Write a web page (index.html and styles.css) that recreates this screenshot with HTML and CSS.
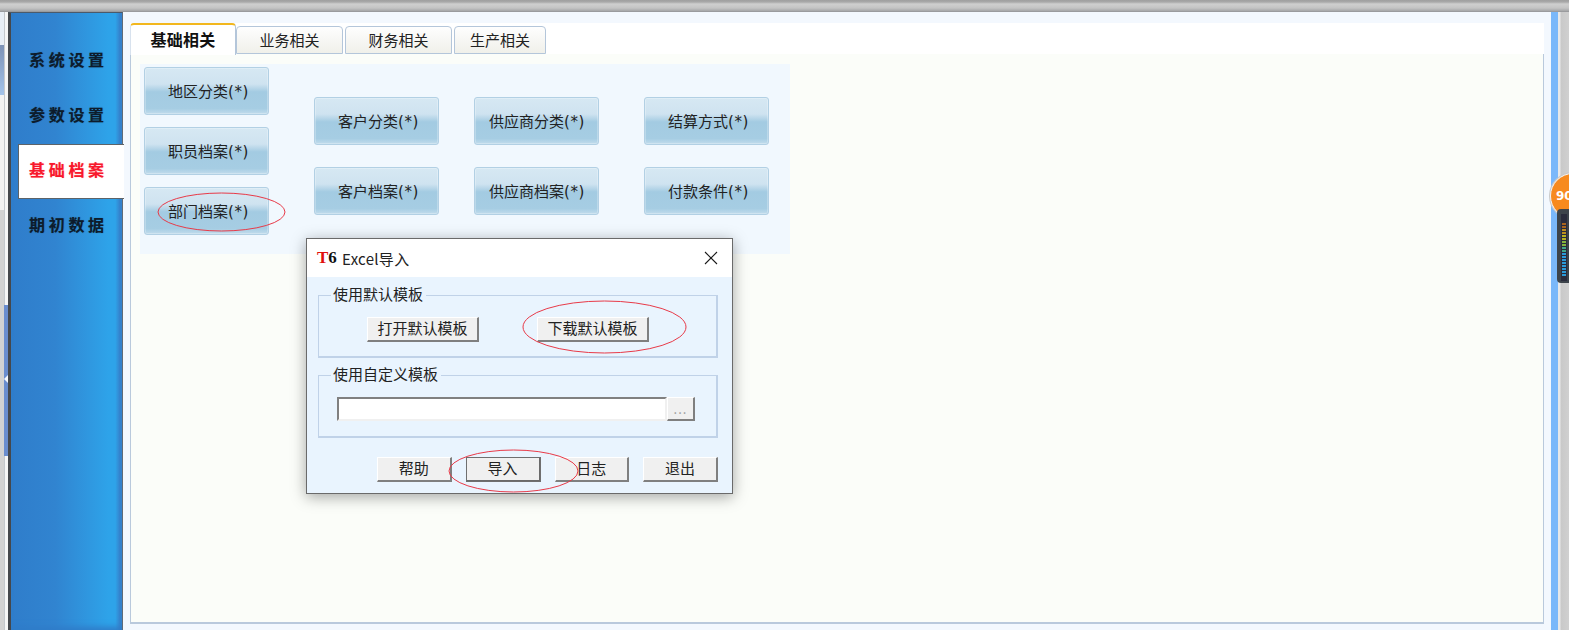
FILE: index.html
```html
<!DOCTYPE html>
<html lang="zh-CN">
<head>
<meta charset="utf-8">
<title>T6 基础档案</title>
<link rel="stylesheet" href="styles.css">
</head>
<body>
<div class="app">
  <div class="topbar"></div>
  <div class="workspace">
    <div class="rail">
      <div class="rail-left">
        <div class="rail-a"></div>
        <div class="rail-b"></div>
        <div class="rail-c"></div>
        <div class="rail-d"></div>
      </div>
      <div class="rail-right">
        <div class="rail-handle"><span class="rail-arrow"></span></div>
      </div>
    </div>
    <nav class="sidebar">
      <div class="side-item">系统设置</div>
      <div class="side-item">参数设置</div>
      <div class="side-item active">基础档案</div>
      <div class="side-item">期初数据</div>
    </nav>
    <main class="main">
      <div class="tabs">
        <div class="tab active">基础相关</div>
        <div class="tab t2">业务相关</div>
        <div class="tab t2">财务相关</div>
        <div class="tab t3">生产相关</div>
      </div>
      <div class="panel">
        <div class="btn-area">
          <div class="col col-a">
            <button class="tile">地区分类<span class="req">(*)</span></button>
            <button class="tile">职员档案<span class="req">(*)</span></button>
            <button class="tile">部门档案<span class="req">(*)</span></button>
          </div>
          <div class="col col-b">
            <button class="tile">客户分类<span class="req">(*)</span></button>
            <button class="tile">客户档案<span class="req">(*)</span></button>
          </div>
          <div class="col col-c">
            <button class="tile long">供应商分类<span class="req">(*)</span></button>
            <button class="tile long">供应商档案<span class="req">(*)</span></button>
          </div>
          <div class="col col-d">
            <button class="tile">结算方式<span class="req">(*)</span></button>
            <button class="tile">付款条件<span class="req">(*)</span></button>
          </div>
        </div>
      </div>
    </main>
    <div class="right-blue"></div>
    <div class="right-gray"></div>
  </div>
</div>

<section class="dialog">
  <header class="dlg-title">
    <span class="logo"><span class="logo-t">T</span>6</span>
    <span class="dlg-name">Excel导入</span>
    <svg class="dlg-close" width="14" height="14" viewBox="0 0 14 14"><path d="M1 1 13 13M13 1 1 13" stroke="#1a1a1a" stroke-width="1.1" fill="none"/></svg>
  </header>
  <div class="dlg-body">
    <fieldset class="group">
      <legend>使用默认模板</legend>
      <div class="group-row">
        <button class="win-btn wide">打开默认模板</button>
        <button class="win-btn wide">下载默认模板</button>
      </div>
    </fieldset>
    <fieldset class="group">
      <legend>使用自定义模板</legend>
      <div class="path-row">
        <input class="path-input" type="text">
        <button class="browse">...</button>
      </div>
    </fieldset>
    <div class="dlg-actions">
      <button class="win-btn">帮助</button>
      <button class="win-btn focus">导入</button>
      <button class="win-btn">日志</button>
      <button class="win-btn">退出</button>
    </div>
  </div>
</section>

<div class="meter">
  <div class="meter-dial">90</div>
  <div class="meter-bar">
    <i class="m1"></i><i class="m1"></i><i class="m2"></i><i class="m2"></i><i class="m3"></i><i class="m3"></i><i class="m4"></i><i class="m4"></i><i class="m5"></i><i class="m5"></i><i class="m6"></i><i class="m6"></i><i class="m6"></i><i class="m6"></i><i class="m6"></i><i class="m6"></i><i class="m6"></i><i class="m6"></i>
  </div>
</div>

<svg class="marks" width="1569" height="630" viewBox="0 0 1569 630">
  <ellipse cx="221.5" cy="212" rx="63.5" ry="19" />
  <ellipse cx="604.5" cy="327" rx="81.5" ry="26" />
  <ellipse cx="513.5" cy="471" rx="64.5" ry="21" />
</svg>
</body>
</html>
```
FILE: styles.css
```css
* { box-sizing: border-box; }
html, body { margin: 0; padding: 0; }
body {
  width: 1569px;
  height: 630px;
  overflow: hidden;
  position: relative;
  background: #f3f8fe;
  font-family: "Noto Sans CJK SC", "Noto Sans", sans-serif;
  color: #1c1c1c;
}
button { font-family: inherit; padding: 0; cursor: default; }

.app { display: flex; flex-direction: column; height: 630px; }
.topbar {
  height: 12px;
  flex: none;
  background: linear-gradient(#9f9f9f 0, #a9a9a9 2px, #cfcfcf 4px, #c4c4c4 8px, #a5a6a8 11px, #8f9093 12px);
}
.workspace { flex: 1; display: flex; min-height: 0; }

/* left rail */
.rail { width: 8px; flex: none; display: flex; background: #f2f2f2; }
.rail-left { width: 4px; display: flex; flex-direction: column; }
.rail-a { height: 33px; background: #e8eef5; }
.rail-b { height: 50px; background: linear-gradient(#7d92b6, #a3c3ea); }
.rail-c { height: 115px; background: #f2f2f2; }
.rail-d { flex: 1; background: #d2d2d2; }
.rail-right { flex: 1; position: relative; background: #f6f6f6; border-left: 1px solid #c4c8cc; padding-top: 293px; }
.rail-handle { height: 151px; margin-left: -1px; background: #6a8dce; position: relative; }
.rail-arrow {
  position: absolute; left: 0; top: 70px; width: 0; height: 0;
  border: 4px solid transparent; border-left: 0; border-right: 4px solid #f4f8ff;
}

/* sidebar */
.sidebar {
  width: 115px;
  flex: none;
  padding-top: 21px;
  background: linear-gradient(90deg, #2f7dcb 0, #3184d0 40%, #2ea3e9 88%, #2ea3e9 94%, #3582cc 98%);
  border-left: 3px solid #45484c;
  border-top: 1px solid #4b5a6b;
  border-right: 1px solid #5f6b78;
  box-shadow: inset 0 -8px 6px -5px #2f7cc8;
}
.side-item {
  height: 55px;
  display: flex;
  align-items: center;
  padding: 0 0 5px 18px;
  font-size: 16px;
  font-weight: 700;
  letter-spacing: 3.7px;
  color: #0d1c2c;
  white-space: nowrap;
  text-shadow: 0 0 1px rgba(13, 28, 44, .45);
}
.side-item.active {
  position: relative;
  margin: 0 -2px 0 7px;
  height: 55px;
  padding: 0 0 5px 10px;
  color: #f8182c;
  text-shadow: 0 0 1px rgba(248, 24, 44, .45);
  background: #fff;
  border: 1px solid #5d6368;
  border-right: 0;
}

/* main */
.main { flex: 1; min-width: 0; padding: 11px 7px 6px 7px; display: flex; flex-direction: column; }
.tabs { height: 31px; flex: none; display: flex; align-items: flex-end; background: #fff; margin-bottom: -1px; position: relative; z-index: 1; }
.tab {
  height: 28px;
  margin-right: 2px;
  padding-bottom: 2px;
  display: flex; align-items: center; justify-content: center;
  font-size: 15px;
  color: #222;
  background: linear-gradient(#fefefe, #f0f0ea);
  border: 1px solid #b4c6da;
  border-bottom: 1px solid #b4c6da;
  border-radius: 4px 4px 0 0;
}
.tab.active {
  width: 106px;
  height: 32px;
  margin-right: 0;
  margin-bottom: -1px;
  font-size: 16px;
  letter-spacing: .3px;
  font-weight: 700;
  color: #111;
  background: #fff;
  border: 0;
  border-right: 1px solid #b4c6da;
  border-left: 1px solid #d8e2ee;
  border-top: 2px solid #f2b71e;
}
.tab.t2 { width: 107px; }
.tab.t3 { width: 92px; }
.panel {
  flex: 1;
  min-height: 0;
  padding: 10px 0 0 9px;
  background: #fbfdf9;
  border: 1px solid #b9c9dc;
  border-width: 1px 1px 2px 1px;
}
.btn-area {
  width: 650px;
  height: 190px;
  display: flex;
  background: #f1f8fe;
  padding-left: 4px;
}
.col { display: flex; flex-direction: column; }
.col-a { gap: 12px; padding-top: 3px; }
.col-b { gap: 22px; padding-top: 33px; margin-left: 45px; }
.col-c { gap: 22px; padding-top: 33px; margin-left: 35px; }
.col-d { gap: 22px; padding-top: 33px; margin-left: 45px; }
.tile {
  width: 125px;
  height: 48px;
  padding: 0 0 0 23px;
  text-align: left;
  white-space: nowrap;
  font-size: 15px;
  line-height: 20px;
  color: #222;
  border: 1px solid #b2d0e4;
  border-radius: 3px;
  background: linear-gradient(#d6e8f3 0, #cfe3f0 35%, #a3cbe2 52%, #a6cde3 88%, #c2dcec 100%);
  box-shadow: inset 0 0 0 1px rgba(255, 255, 255, .25);
}
.tile.long { padding-left: 14px; }
.req { font-family: "DejaVu Sans", sans-serif; letter-spacing: .6px; font-size: 15px; }

/* dialog */
.dialog {
  position: absolute;
  left: 306px;
  top: 238px;
  width: 427px;
  height: 256px;
  display: flex;
  flex-direction: column;
  border: 1px solid #6a6a6a;
  background: #e9f4fe;
  box-shadow: 0 3px 14px rgba(0, 0, 0, .35);
}
.dlg-title {
  height: 38px;
  flex: none;
  display: flex;
  align-items: center;
  padding: 0 14px 0 10px;
  background: #fff;
}
.logo { font-family: "Liberation Serif", serif; font-weight: 700; font-size: 17px; color: #111; width: 25px; }
.logo-t { color: #e0100c; }
.dlg-name { flex: 1; font-size: 15px; letter-spacing: .3px; color: #222; }
.dlg-close { flex: none; }
.dlg-body { flex: 1; display: flex; flex-direction: column; padding: 7px 14px 0 11px; }
.group {
  margin: 0 0 6px;
  padding: 0;
  height: 74px;
  border: 2px solid #c0d2e8;
  border-width: 1px 2px 2px 1px;
  border-radius: 0;
  min-width: 0;
}
.group legend {
  margin-left: 12px;
  padding: 0 3px 2px 2px;
  font-size: 15px;
  line-height: 20px;
  color: #222;
}
.group-row { display: flex; gap: 58px; padding: 11px 0 0 48px; }
.path-row { display: flex; padding: 11px 0 0 18px; }
.win-btn {
  width: 74.75px;
  height: 25px;
  padding-bottom: 3px;
  font-size: 15px;
  line-height: 20px;
  color: #222;
  background: #f0f0f0;
  border: 1px solid;
  border-color: #fff #7f7f7f #7f7f7f #fff;
  border-width: 1px 2px 2px 1px;
}
.win-btn.wide { width: 112px; }
.win-btn.focus { outline: 1px solid #6f6f6f; outline-offset: -1px; border-color: #8a8a8a #6a6a6a #6a6a6a #8a8a8a; }
.path-input {
  width: 330px;
  height: 24px;
  background: #fff;
  border: 2px solid;
  border-color: #808080 #f0f0f0 #f0f0f0 #808080;
  outline: 0;
}
.browse {
  width: 28px;
  height: 24px;
  font-size: 13px;
  letter-spacing: 1px;
  line-height: 14px;
  color: #999;
  background: #f0f0f0;
  border: 1px solid;
  border-color: #fff #7f7f7f #7f7f7f #fff;
  border-width: 1px 2px 2px 1px;
}
.dlg-actions { display: flex; gap: 14px; justify-content: flex-end; margin: 13px 0 0; }

/* right side */
.right-blue { width: 7px; flex: none; background: #7ab8fa; }
.right-gray { width: 11px; flex: none; background: linear-gradient(90deg, #e8e8e8 0, #e8e8e8 2px, #c9c9c9 3px, #d0d0d0 100%); }

.meter { position: absolute; left: 1550px; top: 173px; width: 46px; }
.meter-dial {
  width: 46px;
  height: 46px;
  border-radius: 50%;
  border: 1px solid #f6f6f6;
  box-shadow: 0 0 0 1px #c8c8c8;
  background: #f78a1e;
  color: #fff;
  font: 700 12px/44px "DejaVu Sans", sans-serif;
  text-align: left;
  padding-left: 5px;
  position: relative;
  z-index: 1;
}
.meter-bar {
  position: absolute;
  left: 7px;
  top: 36px;
  width: 30px;
  height: 74px;
  background: #3d444b;
  border-radius: 4px;
  padding: 14px 0 0 5px;
  z-index: 2;
  display: flex;
  flex-direction: column;
  gap: 1px;
}
.meter-bar i { display: block; width: 4px; height: 2px; flex: none; position: relative; }
.meter-bar::before { content: ""; position: absolute; left: 4px; top: 5px; width: 6px; height: 67px; background: #2a2c3c; }
.m1 { background: #a8641f; }
.m2 { background: #bd8f1e; }
.m3 { background: #b8b020; }
.m4 { background: #84b43c; }
.m5 { background: #3fa88a; }
.m6 { background: #2a9ad8; }

.marks { position: absolute; left: 0; top: 0; pointer-events: none; }
.marks ellipse { fill: none; stroke: #e83a48; stroke-width: 1; }
```
